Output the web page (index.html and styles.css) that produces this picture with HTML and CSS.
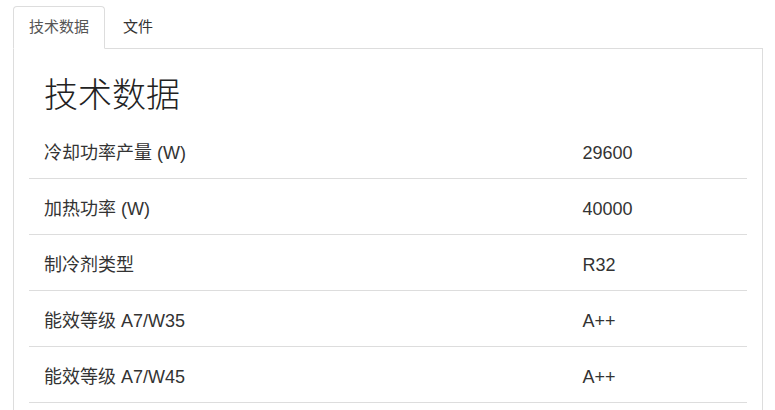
FILE: index.html
```html
<!DOCTYPE html>
<html lang="zh">
<head>
<meta charset="utf-8">
<link rel="stylesheet" href="styles.css">
</head>
<body>
<div class="wrap">
  <ul class="tabs">
    <li class="tab active">技术数据</li>
    <li class="tab">文件</li>
  </ul>
  <div class="panel">
    <h2 class="title">技术数据</h2>
    <table class="data">
      <tr><td class="k">冷却功率产量 (W)</td><td class="v">29600</td></tr>
      <tr><td class="k">加热功率 (W)</td><td class="v">40000</td></tr>
      <tr><td class="k">制冷剂类型</td><td class="v">R32</td></tr>
      <tr><td class="k">能效等级 A7/W35</td><td class="v">A++</td></tr>
      <tr><td class="k">能效等级 A7/W45</td><td class="v">A++</td></tr>
    </table>
  </div>
</div>
</body>
</html>
```
FILE: styles.css
```css
html, body {
  margin: 0;
  padding: 0;
  background: #fff;
  font-family: "Liberation Sans", "Noto Sans CJK SC", sans-serif;
  color: #333;
  overflow: hidden;
}
.wrap {
  padding: 6px 12px 0 13px;
}
.tabs {
  list-style: none;
  margin: 0;
  padding: 0;
  display: flex;
  border-bottom: 1px solid #ddd;
}
.tab {
  font-size: 15px;
  line-height: 20px;
  padding: 10px 15px 11px;
  margin-right: 2px;
  margin-bottom: -1px;
  border: 1px solid transparent;
  border-radius: 4px 4px 0 0;
  color: #333;
}
.tab.active {
  border-color: #ddd;
  border-bottom-color: #fff;
  background: #fff;
  color: #555;
}
.panel {
  box-sizing: border-box;
  border: 1px solid #ddd;
  border-top: none;
  border-bottom: none;
  padding: 12px 15px 0;
  height: 361px;
}
.title {
  font-size: 34px;
  font-weight: 300;
  line-height: 40px;
  margin: 14px 0 8px 15px;
  color: #222;
}
.data {
  width: 100%;
  border-collapse: collapse;
  font-size: 18px;
}
.data td {
  padding: 18px 15px 12px;
  line-height: 25px;
  border-bottom: 1px solid #ddd;
  vertical-align: top;
}
.data .k {
  width: 75%;
}
```
